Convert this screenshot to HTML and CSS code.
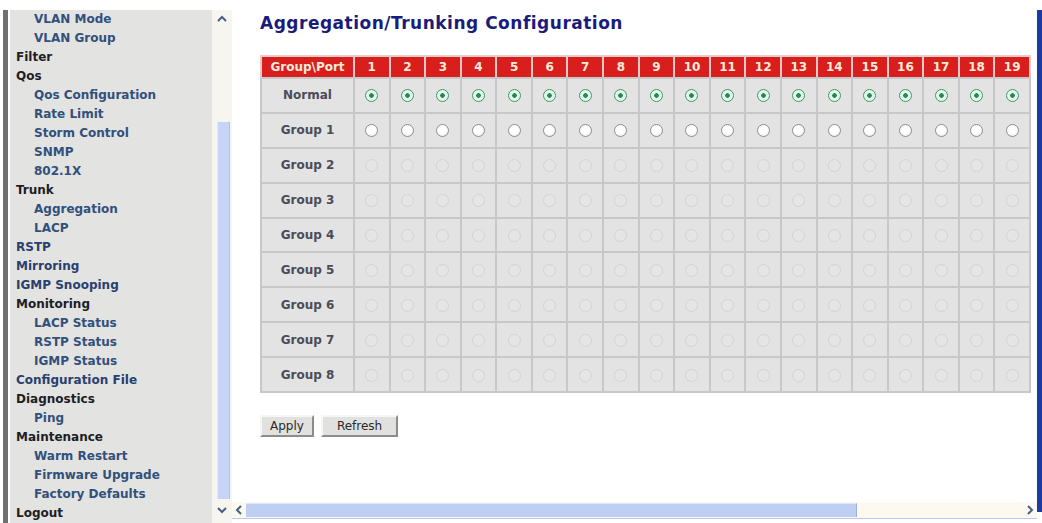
FILE: index.html
```html
<!DOCTYPE html>
<html lang="en">
<head>
    <meta charset="UTF-8">
    <title>Aggregation/Trunking Configuration</title>
    <link rel="stylesheet" href="styles.css">
</head>
<body>
    <!-- left menu frame -->
    <aside class="nav-frame">
        <div class="nav-edge"></div>
        <nav class="menu">
            <a class="sub">VLAN Mode</a>
            <a class="sub">VLAN Group</a>
            <a class="head">Filter</a>
            <span class="head">Qos</span>
            <a class="sub">Qos Configuration</a>
            <a class="sub">Rate Limit</a>
            <a class="sub">Storm Control</a>
            <a class="sub">SNMP</a>
            <a class="sub">802.1X</a>
            <span class="head">Trunk</span>
            <a class="sub">Aggregation</a>
            <a class="sub">LACP</a>
            <a class="link">RSTP</a>
            <a class="link">Mirroring</a>
            <a class="link">IGMP Snooping</a>
            <span class="head">Monitoring</span>
            <a class="sub">LACP Status</a>
            <a class="sub">RSTP Status</a>
            <a class="sub">IGMP Status</a>
            <a class="link">Configuration File</a>
            <span class="head">Diagnostics</span>
            <a class="sub">Ping</a>
            <span class="head">Maintenance</span>
            <a class="sub">Warm Restart</a>
            <a class="sub">Firmware Upgrade</a>
            <a class="sub">Factory Defaults</a>
            <a class="head">Logout</a>
        </nav>
        <div class="vscroll">
            <div class="sb-btn">
                <svg width="10" height="8" viewBox="0 0 10 8"><path d="M1 6 L5 2 L9 6" fill="none" stroke="#4b5f86" stroke-width="2"/></svg>
            </div>
            <div class="vtrack"><div class="vthumb"></div></div>
            <div class="sb-btn">
                <svg width="10" height="8" viewBox="0 0 10 8"><path d="M1 2 L5 6 L9 2" fill="none" stroke="#4b5f86" stroke-width="2"/></svg>
            </div>
        </div>
    </aside>

    <!-- main content frame -->
    <div class="main-frame">
        <div class="main-col">
            <main class="view">
                <h1 class="page-title">Aggregation/Trunking Configuration</h1>
                <form>
                    <table class="grid">
                        <tr>
                            <th class="label-col">Group\Port</th>
                            <th>1</th><th>2</th><th>3</th><th>4</th><th>5</th><th>6</th><th>7</th><th>8</th><th>9</th><th>10</th>
                            <th>11</th><th>12</th><th>13</th><th>14</th><th>15</th><th>16</th><th>17</th><th>18</th><th>19</th>
                        </tr>
                        <tr>
                            <td class="label">Normal</td>
                            <td><input type="radio" name="p1" checked></td><td><input type="radio" name="p2" checked></td><td><input type="radio" name="p3" checked></td><td><input type="radio" name="p4" checked></td><td><input type="radio" name="p5" checked></td>
                            <td><input type="radio" name="p6" checked></td><td><input type="radio" name="p7" checked></td><td><input type="radio" name="p8" checked></td><td><input type="radio" name="p9" checked></td><td><input type="radio" name="p10" checked></td>
                            <td><input type="radio" name="p11" checked></td><td><input type="radio" name="p12" checked></td><td><input type="radio" name="p13" checked></td><td><input type="radio" name="p14" checked></td><td><input type="radio" name="p15" checked></td>
                            <td><input type="radio" name="p16" checked></td><td><input type="radio" name="p17" checked></td><td><input type="radio" name="p18" checked></td><td><input type="radio" name="p19" checked></td>
                        </tr>
                        <tr>
                            <td class="label">Group 1</td>
                            <td><input type="radio" name="p1"></td><td><input type="radio" name="p2"></td><td><input type="radio" name="p3"></td><td><input type="radio" name="p4"></td><td><input type="radio" name="p5"></td>
                            <td><input type="radio" name="p6"></td><td><input type="radio" name="p7"></td><td><input type="radio" name="p8"></td><td><input type="radio" name="p9"></td><td><input type="radio" name="p10"></td>
                            <td><input type="radio" name="p11"></td><td><input type="radio" name="p12"></td><td><input type="radio" name="p13"></td><td><input type="radio" name="p14"></td><td><input type="radio" name="p15"></td>
                            <td><input type="radio" name="p16"></td><td><input type="radio" name="p17"></td><td><input type="radio" name="p18"></td><td><input type="radio" name="p19"></td>
                        </tr>
                        <tr>
                            <td class="label">Group 2</td>
                            <td><input type="radio" name="p1" disabled></td><td><input type="radio" name="p2" disabled></td><td><input type="radio" name="p3" disabled></td><td><input type="radio" name="p4" disabled></td><td><input type="radio" name="p5" disabled></td>
                            <td><input type="radio" name="p6" disabled></td><td><input type="radio" name="p7" disabled></td><td><input type="radio" name="p8" disabled></td><td><input type="radio" name="p9" disabled></td><td><input type="radio" name="p10" disabled></td>
                            <td><input type="radio" name="p11" disabled></td><td><input type="radio" name="p12" disabled></td><td><input type="radio" name="p13" disabled></td><td><input type="radio" name="p14" disabled></td><td><input type="radio" name="p15" disabled></td>
                            <td><input type="radio" name="p16" disabled></td><td><input type="radio" name="p17" disabled></td><td><input type="radio" name="p18" disabled></td><td><input type="radio" name="p19" disabled></td>
                        </tr>
                        <tr>
                            <td class="label">Group 3</td>
                            <td><input type="radio" name="p1" disabled></td><td><input type="radio" name="p2" disabled></td><td><input type="radio" name="p3" disabled></td><td><input type="radio" name="p4" disabled></td><td><input type="radio" name="p5" disabled></td>
                            <td><input type="radio" name="p6" disabled></td><td><input type="radio" name="p7" disabled></td><td><input type="radio" name="p8" disabled></td><td><input type="radio" name="p9" disabled></td><td><input type="radio" name="p10" disabled></td>
                            <td><input type="radio" name="p11" disabled></td><td><input type="radio" name="p12" disabled></td><td><input type="radio" name="p13" disabled></td><td><input type="radio" name="p14" disabled></td><td><input type="radio" name="p15" disabled></td>
                            <td><input type="radio" name="p16" disabled></td><td><input type="radio" name="p17" disabled></td><td><input type="radio" name="p18" disabled></td><td><input type="radio" name="p19" disabled></td>
                        </tr>
                        <tr>
                            <td class="label">Group 4</td>
                            <td><input type="radio" name="p1" disabled></td><td><input type="radio" name="p2" disabled></td><td><input type="radio" name="p3" disabled></td><td><input type="radio" name="p4" disabled></td><td><input type="radio" name="p5" disabled></td>
                            <td><input type="radio" name="p6" disabled></td><td><input type="radio" name="p7" disabled></td><td><input type="radio" name="p8" disabled></td><td><input type="radio" name="p9" disabled></td><td><input type="radio" name="p10" disabled></td>
                            <td><input type="radio" name="p11" disabled></td><td><input type="radio" name="p12" disabled></td><td><input type="radio" name="p13" disabled></td><td><input type="radio" name="p14" disabled></td><td><input type="radio" name="p15" disabled></td>
                            <td><input type="radio" name="p16" disabled></td><td><input type="radio" name="p17" disabled></td><td><input type="radio" name="p18" disabled></td><td><input type="radio" name="p19" disabled></td>
                        </tr>
                        <tr>
                            <td class="label">Group 5</td>
                            <td><input type="radio" name="p1" disabled></td><td><input type="radio" name="p2" disabled></td><td><input type="radio" name="p3" disabled></td><td><input type="radio" name="p4" disabled></td><td><input type="radio" name="p5" disabled></td>
                            <td><input type="radio" name="p6" disabled></td><td><input type="radio" name="p7" disabled></td><td><input type="radio" name="p8" disabled></td><td><input type="radio" name="p9" disabled></td><td><input type="radio" name="p10" disabled></td>
                            <td><input type="radio" name="p11" disabled></td><td><input type="radio" name="p12" disabled></td><td><input type="radio" name="p13" disabled></td><td><input type="radio" name="p14" disabled></td><td><input type="radio" name="p15" disabled></td>
                            <td><input type="radio" name="p16" disabled></td><td><input type="radio" name="p17" disabled></td><td><input type="radio" name="p18" disabled></td><td><input type="radio" name="p19" disabled></td>
                        </tr>
                        <tr>
                            <td class="label">Group 6</td>
                            <td><input type="radio" name="p1" disabled></td><td><input type="radio" name="p2" disabled></td><td><input type="radio" name="p3" disabled></td><td><input type="radio" name="p4" disabled></td><td><input type="radio" name="p5" disabled></td>
                            <td><input type="radio" name="p6" disabled></td><td><input type="radio" name="p7" disabled></td><td><input type="radio" name="p8" disabled></td><td><input type="radio" name="p9" disabled></td><td><input type="radio" name="p10" disabled></td>
                            <td><input type="radio" name="p11" disabled></td><td><input type="radio" name="p12" disabled></td><td><input type="radio" name="p13" disabled></td><td><input type="radio" name="p14" disabled></td><td><input type="radio" name="p15" disabled></td>
                            <td><input type="radio" name="p16" disabled></td><td><input type="radio" name="p17" disabled></td><td><input type="radio" name="p18" disabled></td><td><input type="radio" name="p19" disabled></td>
                        </tr>
                        <tr>
                            <td class="label">Group 7</td>
                            <td><input type="radio" name="p1" disabled></td><td><input type="radio" name="p2" disabled></td><td><input type="radio" name="p3" disabled></td><td><input type="radio" name="p4" disabled></td><td><input type="radio" name="p5" disabled></td>
                            <td><input type="radio" name="p6" disabled></td><td><input type="radio" name="p7" disabled></td><td><input type="radio" name="p8" disabled></td><td><input type="radio" name="p9" disabled></td><td><input type="radio" name="p10" disabled></td>
                            <td><input type="radio" name="p11" disabled></td><td><input type="radio" name="p12" disabled></td><td><input type="radio" name="p13" disabled></td><td><input type="radio" name="p14" disabled></td><td><input type="radio" name="p15" disabled></td>
                            <td><input type="radio" name="p16" disabled></td><td><input type="radio" name="p17" disabled></td><td><input type="radio" name="p18" disabled></td><td><input type="radio" name="p19" disabled></td>
                        </tr>
                        <tr>
                            <td class="label">Group 8</td>
                            <td><input type="radio" name="p1" disabled></td><td><input type="radio" name="p2" disabled></td><td><input type="radio" name="p3" disabled></td><td><input type="radio" name="p4" disabled></td><td><input type="radio" name="p5" disabled></td>
                            <td><input type="radio" name="p6" disabled></td><td><input type="radio" name="p7" disabled></td><td><input type="radio" name="p8" disabled></td><td><input type="radio" name="p9" disabled></td><td><input type="radio" name="p10" disabled></td>
                            <td><input type="radio" name="p11" disabled></td><td><input type="radio" name="p12" disabled></td><td><input type="radio" name="p13" disabled></td><td><input type="radio" name="p14" disabled></td><td><input type="radio" name="p15" disabled></td>
                            <td><input type="radio" name="p16" disabled></td><td><input type="radio" name="p17" disabled></td><td><input type="radio" name="p18" disabled></td><td><input type="radio" name="p19" disabled></td>
                        </tr>
                    </table>
                    <div class="actions">
                        <button type="button" class="btn">Apply</button>
                        <button type="button" class="btn wide">Refresh</button>
                    </div>
                </form>
            </main>
            <div class="hscroll">
                <div class="sb-btn small">
                    <svg width="8" height="10" viewBox="0 0 8 10"><path d="M6 1 L2 5 L6 9" fill="none" stroke="#4b5f86" stroke-width="2"/></svg>
                </div>
                <div class="htrack"><div class="hthumb"></div></div>
                <div class="sb-btn small">
                    <svg width="8" height="10" viewBox="0 0 8 10"><path d="M2 1 L6 5 L2 9" fill="none" stroke="#4b5f86" stroke-width="2"/></svg>
                </div>
            </div>
        </div>
        <div class="frame-edge"></div>
    </div>
</body>
</html>
```

FILE: styles.css
```css
body {
    margin: 0;
    height: 523px;
    overflow: hidden;
    display: flex;
    background-color: #ffffff;
    font-family: 'DejaVu Sans', Verdana, sans-serif;
}

/* ---------- left menu ---------- */

.nav-frame {
    width: 232px;
    flex: none;
    display: flex;
    padding-top: 10px;
    box-sizing: border-box;
}

.nav-edge {
    width: 5px;
    margin-left: 3px;
    margin-right: 2px;
    background-color: #707070;
}

.menu {
    flex: 1;
    background-color: #e3e3e1;
    display: flex;
    flex-direction: column;
    font-size: 12px;
    font-weight: bold;
    line-height: 19px;
    padding-left: 6px;
    overflow: hidden;
}

.menu a,
.menu span {
    white-space: nowrap;
}

.menu .head {
    color: #1d1d26;
}

.menu .link {
    color: #29406e;
}

.menu .sub {
    color: #31507c;
    padding-left: 18px;
}

.vscroll {
    width: 20px;
    display: flex;
    flex-direction: column;
    background-color: #f6f5ef;
    padding-bottom: 4px;
}

.sb-btn {
    height: 18px;
    flex: none;
    display: flex;
    align-items: center;
    justify-content: center;
}

.sb-btn.small {
    width: 14px;
    height: auto;
}

.vtrack {
    flex: 1;
    display: flex;
    padding: 94px 2px 2px 5px;
}

.vthumb {
    flex: 1;
    background-color: #c6d4f6;
    border-left: 1px solid #dfe7fb;
    border-right: 1px solid #aebfe8;
}

/* ---------- main frame ---------- */

.main-frame {
    flex: 1;
    display: flex;
    min-width: 0;
}

.main-col {
    flex: 1;
    display: flex;
    flex-direction: column;
    min-width: 0;
}

.view {
    flex: 1;
    overflow: hidden;
    padding: 13px 0 0 28px;
}

.frame-edge {
    width: 5px;
    flex: none;
    margin: 10px 0 11px;
    background-color: #1b3ba3;
}

.page-title {
    margin: 0;
    font-size: 17px;
    line-height: 20px;
    letter-spacing: 0.5px;
    font-weight: bold;
    color: #1b1c7a;
    white-space: nowrap;
}

.grid {
    margin-top: 22px;
    width: 771px;
    table-layout: fixed;
    border-collapse: collapse;
    font-size: 12px;
}

.grid th {
    height: 20px;
    padding: 0;
    background-color: #d91e1e;
    color: #fbecd9;
    font-size: 12px;
    font-weight: bold;
    border: 2px solid #e7caca;
    border-bottom-color: #c8c8c8;
}

.grid th.label-col {
    width: 91px;
}

.grid td {
    height: 32.9px;
    padding: 0;
    text-align: center;
    background-color: #e3e3e3;
    border: 2px solid #c8c8c8;
}

.grid td.label {
    font-weight: bold;
    color: #4a4c58;
}

.grid input[type="radio"] {
    appearance: none;
    -webkit-appearance: none;
    width: 13px;
    height: 13px;
    margin: 0;
    vertical-align: middle;
    border: 1px solid #8e8e8e;
    border-radius: 50%;
    background: radial-gradient(circle at 45% 40%, #ffffff 45%, #e2e4ea 100%);
}

.grid input[type="radio"]:checked {
    border-color: #43976a;
    background: radial-gradient(circle, #2a8a52 0, #2a8a52 2px, #e4f5ea 2.6px);
}

.grid input[type="radio"]:disabled {
    border-color: #d3d3d3;
    background: #e5e5e5;
}

.actions {
    display: flex;
    gap: 7px;
    margin-top: 22px;
}

.btn {
    height: 22px;
    padding: 0 8px;
    font-family: 'DejaVu Sans', Verdana, sans-serif;
    font-size: 12px;
    color: #2a2a2a;
    background-color: #e1e1df;
    border: 2px solid;
    border-color: #f7f7f7 #8c8c8c #8c8c8c #f7f7f7;
}

.btn.wide {
    padding: 0 14px;
}

/* ---------- bottom scroll bar ---------- */

.hscroll {
    height: 16px;
    flex: none;
    margin-bottom: 4px;
    display: flex;
    background-color: #fbf9f0;
    border-bottom: 1px solid #b9c8ea;
}

.htrack {
    flex: 1;
    padding: 1px 0;
}

.hthumb {
    width: 611px;
    height: 100%;
    background-color: #bfcff4;
    border-top: 1px solid #dde6fb;
    border-right: 1px solid #9fb1dc;
    box-sizing: border-box;
}
```
